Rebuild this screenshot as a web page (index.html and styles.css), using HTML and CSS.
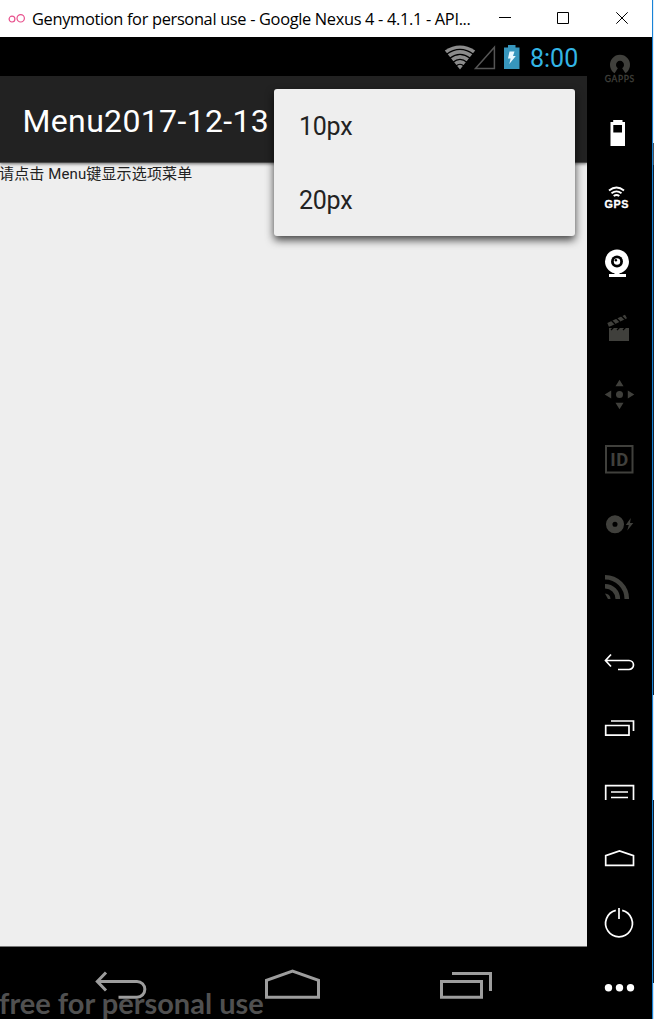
FILE: index.html
```html
<!DOCTYPE html>
<html lang="zh">
<head>
<meta charset="utf-8">
<title>Genymotion</title>
<link rel="stylesheet" href="styles.css">
</head>
<body>
<div class="window">
  <header class="titlebar">
    <svg class="logo" width="18" height="12" viewBox="0 0 18 12"><circle cx="4" cy="6.100" r="2.900"/><circle cx="12.700" cy="5.300" r="3.700"/></svg>
    <span class="caption">Genymotion for personal use - Google Nexus 4 - 4.1.1 - API...</span>
    <svg class="controls" width="176" height="37" viewBox="476 0 176 37"><path d="M499 17.5h12M557.5 12.5h11v11h-11zM616.3 12.3l11.4 11.4M627.7 12.3l-11.4 11.4"/></svg>
  </header>
  <div class="main">
    <div class="device">
      <div class="statusbar">
        <svg width="78" height="39" viewBox="444 37 78 39">
          <path fill="#8c8c8c" d="M460 69.5L444.8 50.5Q460 40.5 475.2 50.5Z"/>
          <path class="wifi-gap" d="M446.5 54.3Q460 44.5 473.5 54.3M449.8 58.2Q460 50.5 470.2 58.2M453 62.2Q460 56.5 467 62.2M456 66Q460 62.5 464 66"/>
          <path fill="none" stroke="#555" stroke-width="1.5" d="M475.5 68.6L494.4 47.3V68.6Z"/>
          <path fill="#3796bd" d="M504 47.5h4V45h7.5v2.500h4V69H504z"/>
          <path fill="#eaf8ff" d="M509.500 51.500h5l-1.500 4.500h2.800l-6.500 8 1.300-5.500h-2.600z"/>
        </svg>
        <span class="clock">8:00</span>
      </div>
      <div class="actionbar"><span class="app-title">Menu2017-12-13</span>
        <div class="menu"><div class="menu-item">10px</div><div class="menu-item">20px</div></div>
      </div>
      <div class="content"><span class="hint">请点击 Menu键显示选项菜单</span></div>
      <div class="navbar">
        <span class="watermark">free for personal use</span>
        <svg class="nav-icons" width="587" height="72" viewBox="0 947 587 72">
          <path d="M106 972.500L97.300 981.500L106 990.500M98 981.500H137a7.800 7.800 0 0 1 0 15.700H118.500"/>
          <path d="M266.500 997.200V980.300L292.500 971.200L318.500 980.300V997.200Z"/>
          <path d="M452 973.500H490.500V991M441.500 981.500H481.500V997.200H441.500Z"/>
        </svg>
      </div>
    </div>
    <aside class="tools">
      <svg class="tool off" viewBox="587 37 65 65"><path fill="none" stroke="currentColor" stroke-width="6" d="M616.200 70.700A7 7 0 1 1 623.800 70.700"/><text class="gapps" x="604.700" y="82" font-size="8.500" textLength="29.500">GAPPS</text></svg>
      <svg class="tool" viewBox="587 102 65 65"><path fill-rule="evenodd" d="M610.500 122h2.700v-2h9.300v2h2.500v24h-14.500zM613.300 125v7.500h8.700V125z"/></svg>
      <svg class="tool" viewBox="587 167 65 65"><path class="line arc" d="M609 190.500Q616.500 184.500 624 190.500M611.500 193.300Q616.500 189.500 621.500 193.300M613.700 196Q616.500 193.800 619.300 196"/><text class="heavy" x="604.500" y="207.700" font-size="10.800" textLength="24">GPS</text></svg>
      <svg class="tool" viewBox="587 232 65 65"><circle cx="617" cy="261.500" r="12"/><path d="M614.500 272h5v2h6.500v3h-17v-3h5.500z"/><circle class="hole" cx="617" cy="261.500" r="6"/><circle cx="617" cy="261.500" r="3.200"/><circle class="hole" cx="615.900" cy="260.300" r="1.200"/></svg>
      <svg class="tool off" viewBox="587 297 65 65"><path d="M609 327h20v14h-20zM607.300 323L625 314.800l2 3.500L609 327z"/><path class="cut" d="M609 327.300h20M611 330l3-3M617 330l3-3M623 330l3-3M611 320l4 4M616 317.800l4 4M621 315.500l4 4"/></svg>
      <svg class="tool off" viewBox="587 362 65 65"><circle cx="619.500" cy="394.500" r="3.500"/><path d="M619.500 379.700l4 6.500h-8zM619.500 409.300l4-6.500h-8zM604.700 394.500l6.500-4v8zM634.300 394.500l-6.500-4v8z"/></svg>
      <svg class="tool off" viewBox="587 427 65 65"><path class="line wide" d="M606 446h26.500v26.500H606z"/><text class="ident" x="610.200" y="466" font-size="18.500" textLength="18">ID</text></svg>
      <svg class="tool off" viewBox="587 492 65 65"><circle class="line disc" cx="615" cy="524.300" r="5.800"/><path d="M630.800 518l-5 7h3l-1.500 5.500 6-7.500h-3.300z"/></svg>
      <svg class="tool off" viewBox="587 557 65 65"><path class="line rss" d="M605 577.200A21.800 21.800 0 0 1 626.800 599M605 586.200A12.800 12.800 0 0 1 617.800 599"/><path d="M605 593.500a5.500 5.500 0 0 1 5.500 5.500h-2.500z"/></svg>
      <svg class="tool lower" viewBox="587 631 65 65"><path class="line" d="M611 654.500L605.500 660.500L611 666.500M605.500 660.500H629a4.500 4.500 0 0 1 0 9H618"/></svg>
      <svg class="tool" viewBox="587 696 65 65"><path class="line" d="M611 721H633.500V731M605.700 725.500H629V735.200H605.700Z"/></svg>
      <svg class="tool" viewBox="587 761 65 65"><path class="line" d="M605.700 800V785.700H633.500V800M611 792h17M611 797.500h17"/></svg>
      <svg class="tool" viewBox="587 826 65 65"><path class="line" d="M605.700 865.300V855.700L619.500 851L633.500 855.700V865.300Z"/></svg>
      <svg class="tool" viewBox="587 891 65 65"><path class="line" d="M615.800 910.400A13.400 13.400 0 1 0 622.200 910.400M619 908V919"/></svg>
      <svg class="tool" viewBox="587 956 65 65"><circle cx="608.500" cy="987.700" r="3.700"/><circle cx="619.500" cy="987.700" r="3.700"/><circle cx="630.500" cy="987.700" r="3.700"/></svg>
    </aside>
  </div>
</div>
</body>
</html>
```
FILE: styles.css
```css
* { box-sizing: border-box; }
body { margin: 0; background: linear-gradient(#e3eef8 143px, #4a5058 143px 165px, #14202c 165px 695px, #dce9f4 695px 800px, #14202c 800px 983px, #cfe4f5 983px); }
.window { width: 653px; height: 1019px; overflow: hidden; border-right: 1px solid #1883d7; display: flex; flex-direction: column; }
.titlebar { height: 37px; flex: none; display: flex; align-items: center; background: #fff; padding-left: 8px; }
.logo { fill: none; stroke: #e8518d; stroke-width: 1.2; flex: none; }
.caption { font: 16.400px "Open Sans", sans-serif; color: #000; margin-left: 6px; width: 444px; white-space: nowrap; letter-spacing: -0.330px; padding-bottom: 1px; }
.controls { fill: none; stroke: #000; stroke-width: 1; flex: none; }
.main { display: flex; height: 982px; }
.device { width: 587px; display: flex; flex-direction: column; background: #000; }
.statusbar { height: 39px; flex: none; display: flex; padding-left: 444px; }
.wifi-gap { fill: none; stroke: #000; stroke-width: 1.2; }
.clock { font: 25px/43px Roboto, sans-serif; color: #33b5e5; margin-left: 8px; }
.actionbar { height: 87px; flex: none; position: relative; z-index: 1; background: #222; padding-left: 22.500px; border-bottom: 1px solid #4b4b4b; box-shadow: 0 1px 3px #0008; }
.app-title { font: 32px/90px Roboto, sans-serif; letter-spacing: 0.350px; color: #fff; white-space: nowrap; }
.menu { position: absolute; left: 274px; top: 13px; width: 301px; height: 147px; border-radius: 3px; background: #eee; box-shadow: 0 4px 8px #000b; }
.menu-item { height: 74px; padding-left: 25px; font: 25px/75px Roboto, sans-serif; letter-spacing: -0.250px; color: #222; }
.content { height: 784px; flex: none; background: #eee; display: flex; align-items: flex-start; border-bottom: 1px solid #777; }
.hint { font: 15px/23px Roboto, "Noto Sans CJK SC", sans-serif; letter-spacing: 0.130px; color: #222; margin-left: -1px; white-space: nowrap; }
.navbar { height: 72px; position: relative; overflow: hidden; }
.watermark { display: block; padding-top: 37px; margin-left: -1px; font: bold 29px/38px Lato, sans-serif; color: #505050; white-space: nowrap; }
.nav-icons { position: absolute; left: 0; top: 0; fill: none; stroke: #9d9d9d; stroke-width: 3; }
.tools { width: 65px; background: #000; overflow: hidden; display: flex; flex-direction: column; }
.tool { width: 65px; height: 65px; flex: none; color: #fff; fill: currentColor; font-family: Lato, sans-serif; }
.off { color: #40403c; }
.lower { margin-top: 9px; }
.line { fill: none; stroke: currentColor; stroke-width: 1.700; }
.wide { stroke-width: 2; }
.arc { stroke-width: 1.900; }
.disc { stroke-width: 6.500; }
.rss { stroke-width: 4.600; }
.hole { fill: #000; }
.cut { stroke: #000; stroke-width: 1.300; }
.gapps { stroke: currentColor; stroke-width: 0.300; }
.heavy { font-family: "Liberation Sans", sans-serif; font-weight: bold; stroke: currentColor; stroke-width: 0.300; }
.ident { font-family: Roboto, sans-serif; font-weight: bold; }
```
